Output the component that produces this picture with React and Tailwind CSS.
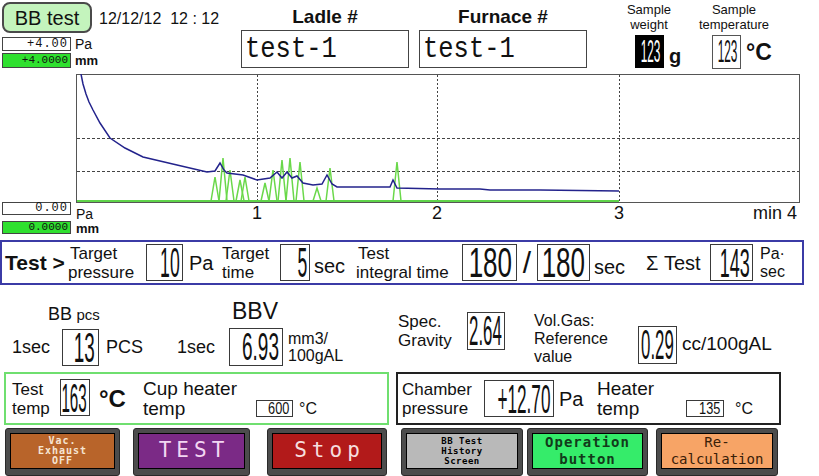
import React from 'react';

const blue = [
  [5, 0], [7, 10], [10, 20], [13, 28], [17, 36], [24, 49], [34, 64], [49, 74], [67, 83], [101, 91],
  [131, 98], [139, 97], [144, 89], [148, 96], [151, 99], [167, 101], [181, 106], [194, 104],
  [201, 98], [206, 104], [211, 98], [216, 104], [221, 102], [227, 109], [237, 111], [246, 110],
  [251, 101], [256, 110], [261, 113], [314, 113], [317, 106], [321, 114], [364, 115],
  [404, 115], [414, 116], [464, 116], [543, 117],
];

const spikes = [
  [139, 103], [147, 84], [154, 96], [164, 106], [169, 103], [189, 109], [197, 96],
  [206, 86], [214, 84], [224, 88], [241, 114], [254, 94], [321, 88],
];

const Box = ({ className = '', children }) => (
  <div className={`flex shrink-0 items-center justify-end overflow-visible border border-[#3a3a3a] ${className}`}>
    {children}
  </div>
);

const Num = ({ className = '', children }) => (
  <span className={`inline-block origin-right whitespace-nowrap leading-[0.8] ${className}`}>{children}</span>
);

const Btn = ({ outer = '', inner = '', children }) => (
  <div className={`h-[48px] shrink-0 rounded-[3px] border border-[#2a2a2a] bg-[#4c4c4c] p-[4px] ${outer}`}>
    <div className={`flex h-[36px] flex-col items-center justify-center border border-black font-['DejaVu_Sans_Mono',monospace] font-bold ${inner}`}>
      {children}
    </div>
  </div>
);

const Chart = () => (
  <svg width="724" height="163" className="block shrink-0">
    <rect x="0.5" y="0.5" width="723" height="128" fill="white" stroke="#555" />
    {[181, 361, 543].map((x) => (
      <line key={x} x1={x + 0.5} x2={x + 0.5} y1="1" y2="128" stroke="#444" strokeDasharray="2 2" />
    ))}
    {[64, 97].map((y) => (
      <line key={y} x1="1" x2="723" y1={y + 0.5} y2={y + 0.5} stroke="#444" strokeDasharray="3 2" />
    ))}
    {spikes.map(([x, y]) => (
      <path key={x} d={`M${x - 4} 127 L${x} ${y} L${x + 4} 127`} fill="none" stroke="#6ad84a" strokeWidth="1.5" />
    ))}
    <line x1="1" x2="543" y1="127" y2="127" stroke="#5fd34a" strokeWidth="2" />
    <polyline points={blue.map((p) => p.join(',')).join(' ')} fill="none" stroke="#23238c" strokeWidth="1.5" />
    <g fontFamily="Liberation Sans, sans-serif" fontSize="18" fill="#111">
      <text x="181" y="145" textAnchor="middle">1</text>
      <text x="361" y="145" textAnchor="middle">2</text>
      <text x="543" y="145" textAnchor="middle">3</text>
      <text x="721" y="145" textAnchor="end">min 4</text>
    </g>
  </svg>
);

export default function App() {
  return (
    <div className="h-[476px] w-[819px] overflow-hidden bg-white font-['Liberation_Sans',sans-serif] text-[#111]">
      {/* header */}
      <div className="flex h-[74px]">
        <div className="w-[241px] shrink-0 pl-[2px] pt-[2px]">
          <div className="flex">
            <div className="flex h-[31px] w-[90px] items-center justify-center rounded-[8px] border-2 border-[#4a4a4a] bg-[#c4f4bd] text-[20px]">
              BB test
            </div>
            <div className="ml-[7px] mt-[5px] text-[16px] whitespace-pre">12/12/12  12 : 12</div>
          </div>
          <div className="mt-[4px] flex items-center">
            <div className="h-[14px] w-[69px] border border-[#444] pr-[2px] text-right font-['Liberation_Mono',monospace] text-[12px] leading-[12px] tracking-[1px]">
              +4.00
            </div>
            <span className="ml-[4px] text-[14px] leading-[14px]">Pa</span>
          </div>
          <div className="mt-[2px] flex items-center">
            <div className="h-[15px] w-[69px] border border-[#444] bg-[#2fe02f] pr-[2px] text-right font-['Liberation_Mono',monospace] text-[11px] leading-[13px]">
              +4.0000
            </div>
            <span className="ml-[4px] text-[13px] font-bold leading-[14px]">mm</span>
          </div>
        </div>

        <div className="flex w-[168px] shrink-0 flex-col items-center">
          <div className="mt-[6px] text-[19px] font-bold leading-[22px]">Ladle #</div>
          <div className="mt-[2px] h-[38px] w-[168px] border border-[#444] pl-[3px]">
            <span className="inline-block origin-left scale-x-[0.85] font-['Liberation_Mono',monospace] text-[30px] leading-[36px]">test-1</span>
          </div>
        </div>

        <div className="ml-[10px] flex w-[168px] shrink-0 flex-col items-center">
          <div className="mt-[6px] text-[19px] font-bold leading-[22px]">Furnace #</div>
          <div className="mt-[2px] h-[38px] w-[168px] border border-[#444] pl-[3px]">
            <span className="inline-block origin-left scale-x-[0.85] font-['Liberation_Mono',monospace] text-[30px] leading-[36px]">test-1</span>
          </div>
        </div>

        <div className="ml-[33px] flex w-[58px] shrink-0 flex-col">
          <div className="pt-[2px] text-center text-[13px] leading-[15px]">
            Sample
            <br />
            weight
          </div>
          <div className="mt-[3px] flex items-end">
            <Box className="ml-[15px] h-[33px] w-[29px] border-black bg-black pr-[3px]">
              <Num className="scale-x-[0.37] text-[32px] text-white">123</Num>
            </Box>
            <span className="ml-[5px] text-[20px] font-bold leading-[24px]">g</span>
          </div>
        </div>

        <div className="ml-[11px] flex w-[90px] shrink-0 flex-col">
          <div className="pt-[2px] text-center text-[13px] leading-[15px]">
            Sample
            <br />
            temperature
          </div>
          <div className="mt-[3px] flex items-center">
            <Box className="ml-[23px] h-[34px] w-[29px] border-[#555] pr-[3px]">
              <Num className="scale-x-[0.37] text-[32px]">123</Num>
            </Box>
            <span className="ml-[5px] text-[23px] font-bold leading-[24px]">°C</span>
          </div>
        </div>
      </div>

      {/* chart */}
      <div className="flex h-[163px]">
        <div className="w-[76px] shrink-0 pl-[2px] pt-[128px]">
          <div className="flex h-[13px] items-start">
            <div className="h-[13px] w-[69px] shrink-0 border border-[#444] pr-[2px] text-right font-['Liberation_Mono',monospace] text-[12px] leading-[11px] tracking-[1px]">
              0.00
            </div>
            <span className="ml-[5px] mt-[6px] text-[14px] leading-[12px]">Pa</span>
          </div>
          <div className="mt-[6px] flex h-[13px] items-start">
            <div className="h-[13px] w-[69px] shrink-0 border border-[#444] bg-[#2fe02f] pr-[2px] text-right font-['Liberation_Mono',monospace] text-[11px] leading-[11px]">
              0.0000
            </div>
            <span className="ml-[5px] mt-[1px] text-[13px] font-bold leading-[13px]">mm</span>
          </div>
        </div>
        <Chart />
      </div>

      {/* test row */}
      <div className="mt-[3px] flex h-[45px] w-[804px] items-center border-2 border-[#3b3ba6]">
        <div className="w-[66px] shrink-0 pl-[3px] text-[21px] font-bold leading-none">Test &gt;</div>
        <div className="w-[78px] shrink-0 text-[17px] leading-[19px]">
          <div className="pl-[2px]">Target</div>
          <div>pressure</div>
        </div>
        <Box className="h-[37px] w-[37px] pr-[2px]">
          <Num className="scale-x-[0.42] text-[42px]">10</Num>
        </Box>
        <div className="w-[37px] shrink-0 pl-[6px] text-[20px]">Pa</div>
        <div className="w-[60px] shrink-0 pl-[2px] text-[17px] leading-[19px]">
          Target
          <br />
          time
        </div>
        <Box className="h-[37px] w-[30px] pr-[2px]">
          <Num className="scale-x-[0.42] text-[42px]">5</Num>
        </Box>
        <div className="w-[44px] shrink-0 pl-[4px] pt-[6px] text-[20px]">sec</div>
        <div className="w-[108px] shrink-0 pl-[2px] text-[17px] leading-[19px]">
          <div className="pl-[2px]">Test</div>
          <div className="whitespace-nowrap">integral time</div>
        </div>
        <Box className="h-[37px] w-[55px] pr-[4px]">
          <Num className="scale-x-[0.62] text-[42px]">180</Num>
        </Box>
        <div className="w-[20px] shrink-0 text-center text-[30px] leading-none">/</div>
        <Box className="h-[37px] w-[53px] pr-[4px]">
          <Num className="scale-x-[0.62] text-[42px]">180</Num>
        </Box>
        <div className="w-[54px] shrink-0 pl-[4px] pt-[8px] text-[20px]">sec</div>
        <div className="w-[66px] shrink-0 pl-[2px] text-[20px]">Σ Test</div>
        <Box className="h-[37px] w-[43px] pr-[2px]">
          <Num className="scale-x-[0.45] text-[40px]">143</Num>
        </Box>
        <div className="w-[44px] shrink-0 pl-[7px] text-[16px] leading-[18px]">
          Pa·
          <br />
          sec
        </div>
      </div>

      {/* readings */}
      <div className="flex h-[87px]">
        <div className="w-[165px] shrink-0 pt-[19px]">
          <div className="pl-[48px] leading-[20px]">
            <span className="text-[18px]">BB</span> <span className="text-[15px]">pcs</span>
          </div>
          <div className="mt-[4px] flex items-center">
            <div className="w-[62px] shrink-0 pl-[12px] text-[18px]">1sec</div>
            <Box className="h-[37px] w-[37px] pr-[3px]">
              <Num className="scale-x-[0.45] text-[42px]">13</Num>
            </Box>
            <div className="ml-[7px] text-[18px]">PCS</div>
          </div>
        </div>

        <div className="w-[230px] shrink-0 pt-[16px]">
          <div className="pl-[67px] text-[23px] leading-[20px]">BBV</div>
          <div className="mt-[7px] flex items-center">
            <div className="w-[64px] shrink-0 pl-[12px] text-[18px]">1sec</div>
            <Box className="h-[38px] w-[54px] pr-[3px]">
              <Num className="scale-x-[0.5] text-[38px]">6.93</Num>
            </Box>
            <div className="ml-[5px] text-[16px] leading-[17px]">
              mm3/
              <br />
              100gAL
            </div>
          </div>
        </div>

        <div className="flex w-[135px] shrink-0 items-center pt-[4px]">
          <div className="w-[72px] shrink-0 pl-[3px] text-[17px] leading-[19px]">
            Spec.
            <br />
            Gravity
          </div>
          <Box className="h-[38px] w-[38px] pr-[2px]">
            <Num className="scale-x-[0.4] text-[42px]">2.64</Num>
          </Box>
        </div>

        <div className="flex shrink-0 items-start pt-[27px]">
          <div className="w-[108px] shrink-0 pl-[4px] text-[16px] leading-[18px]">
            Vol.Gas:
            <br />
            Reference
            <br />
            value
          </div>
          <Box className="mt-[14px] h-[38px] w-[39px] pr-[2px]">
            <Num className="scale-x-[0.4] text-[42px]">0.29</Num>
          </Box>
          <div className="ml-[5px] mt-[22px] text-[19px] leading-[20px]">cc/100gAL</div>
        </div>
      </div>

      {/* status boxes */}
      <div className="flex h-[53px]">
        <div className="ml-[4px] flex h-[53px] w-[385px] shrink-0 items-center border-2 border-[#6fdf6f]">
          <div className="w-[54px] shrink-0 pl-[6px] text-[17px] leading-[19px]">
            Test
            <br />
            temp
          </div>
          <Box className="mb-[2px] h-[37px] w-[30px] pr-[2px]">
            <Num className="scale-x-[0.38] text-[40px]">163</Num>
          </Box>
          <div className="w-[45px] shrink-0 pl-[9px] text-[24px] font-bold">°C</div>
          <div className="w-[121px] shrink-0 pl-[8px] text-[19px] leading-[20px]">
            Cup heater
            <br />
            temp
          </div>
          <Box className="mb-[6px] h-[17px] w-[37px] self-end pr-[3px]">
            <Num className="scale-x-[0.75] text-[17px]">600</Num>
          </Box>
          <div className="mb-[6px] ml-[6px] self-end text-[16px] leading-[17px]">°C</div>
        </div>

        <div className="ml-[7px] flex h-[53px] w-[385px] shrink-0 items-center border-2 border-[#222]">
          <div className="w-[86px] shrink-0 pl-[4px] text-[17px] leading-[19px]">
            Chamber
            <br />
            pressure
          </div>
          <Box className="h-[37px] w-[70px] pr-[3px]">
            <Num className="scale-x-[0.43] text-[40px]">+12.70</Num>
          </Box>
          <div className="w-[43px] shrink-0 pl-[5px] text-[20px]">Pa</div>
          <div className="w-[89px] shrink-0 text-[19px] leading-[20px]">
            Heater
            <br />
            temp
          </div>
          <Box className="mb-[6px] h-[17px] w-[38px] self-end pr-[3px]">
            <Num className="scale-x-[0.75] text-[17px]">135</Num>
          </Box>
          <div className="mb-[6px] ml-[11px] self-end text-[16px] leading-[17px]">°C</div>
        </div>
      </div>

      {/* buttons */}
      <div className="mt-[3px] flex">
        <Btn outer="ml-[5px] w-[115px]" inner="bg-[#b8642a] text-[10px] leading-[10px] tracking-[1px] text-[#f6e4d2]">
          <span>Vac.</span>
          <span>Exhaust</span>
          <span>OFF</span>
        </Btn>
        <Btn outer="ml-[13px] w-[117px]" inner="bg-[#7b2a86] font-normal text-[21px] tracking-[5px] text-[#f2d6f2]">
          <span className="pl-[5px]">TEST</span>
        </Btn>
        <Btn outer="ml-[17px] w-[120px]" inner="bg-[#b21a1a] font-normal text-[21px] tracking-[5px] text-[#f6dede]">
          <span className="pl-[5px]">Stop</span>
        </Btn>
        <Btn outer="ml-[14px] w-[122px]" inner="bg-[#b9b9b9] text-[9px] leading-[10px] tracking-[0.5px] text-black">
          <span>BB Test</span>
          <span>History</span>
          <span>Screen</span>
        </Btn>
        <Btn outer="ml-[4px] w-[121px]" inner="bg-[#35ec6a] text-[14px] leading-[17px] tracking-[1px] text-[#123a1a]">
          <span>Operation</span>
          <span>button</span>
        </Btn>
        <Btn outer="ml-[8px] w-[122px]" inner="bg-[#f7a466] font-normal text-[14px] leading-[17px] text-[#3a2008]">
          <span>Re-</span>
          <span>calculation</span>
        </Btn>
      </div>
    </div>
  );
}
